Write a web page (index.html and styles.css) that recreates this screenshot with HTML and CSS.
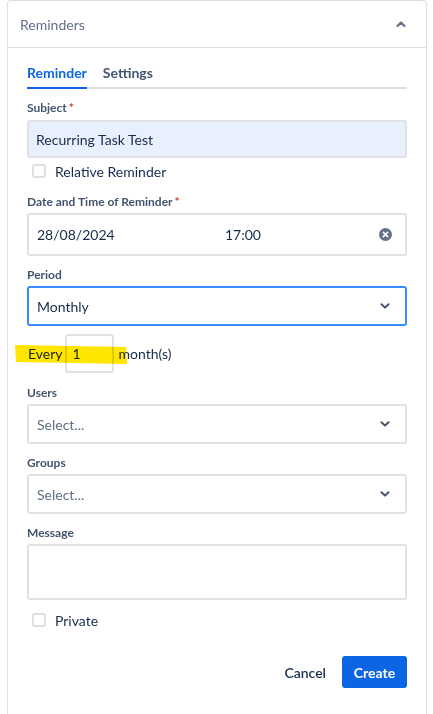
FILE: index.html
```html
<!DOCTYPE html>
<html lang="en">
<head>
<meta charset="utf-8">
<title>Reminders</title>
<link rel="stylesheet" href="styles.css">
</head>
<body>
<div class="panel">
  <div class="panel-header">
    <span class="panel-title">Reminders</span>
    <svg class="caret-up" width="10" height="6" viewBox="0 0 10 6"><path d="M1.5 5 L5 1.6 L8.5 5" fill="none" stroke="#626f86" stroke-width="2.2" stroke-linecap="round" stroke-linejoin="round"/></svg>
  </div>
  <div class="panel-body">
    <div class="tabs">
      <div class="tab active">Reminder</div>
      <div class="tab">Settings</div>
    </div>

    <label class="field-label first">Subject<span class="req">*</span></label>
    <div class="input autofill">Recurring Task Test</div>

    <div class="check-row">
      <span class="checkbox"></span><span class="check-text">Relative Reminder</span>
    </div>

    <label class="field-label">Date and Time of Reminder<span class="req">*</span></label>
    <div class="input datetime">
      <span class="date">28/08/2024</span>
      <span class="time">17:00</span>
      <svg class="clear" width="13" height="13" viewBox="0 0 12 12"><circle cx="6" cy="6" r="6" fill="#626f86"/><path d="M4 4 L8 8 M8 4 L4 8" stroke="#fff" stroke-width="1.6" stroke-linecap="round"/></svg>
    </div>

    <label class="field-label">Period</label>
    <div class="input select focused">
      <span class="value">Monthly</span>
      <svg class="chev" width="10" height="6" viewBox="0 0 10 6"><path d="M1.5 1.2 L5 4.6 L8.5 1.2" fill="none" stroke="#44546f" stroke-width="2" stroke-linecap="round" stroke-linejoin="round"/></svg>
    </div>

    <div class="every-row">
      <span class="every-text">Every</span>
      <span class="num-box">1</span>
      <span class="every-text">month(s)</span>
      <svg class="highlight" width="114" height="24" viewBox="0 0 114 24" preserveAspectRatio="none"><path d="M1 3 L112 5 L113 22 L2 20 Z" fill="#ffe500"/></svg>
    </div>

    <label class="field-label gap12">Users</label>
    <div class="input select">
      <span class="placeholder">Select...</span>
      <svg class="chev" width="10" height="6" viewBox="0 0 10 6"><path d="M1.5 1.2 L5 4.6 L8.5 1.2" fill="none" stroke="#44546f" stroke-width="2" stroke-linecap="round" stroke-linejoin="round"/></svg>
    </div>

    <label class="field-label">Groups</label>
    <div class="input select">
      <span class="placeholder">Select...</span>
      <svg class="chev" width="10" height="6" viewBox="0 0 10 6"><path d="M1.5 1.2 L5 4.6 L8.5 1.2" fill="none" stroke="#44546f" stroke-width="2" stroke-linecap="round" stroke-linejoin="round"/></svg>
    </div>

    <label class="field-label">Message</label>
    <div class="input textarea"></div>

    <div class="check-row private">
      <span class="checkbox"></span><span class="check-text">Private</span>
    </div>

    <div class="actions">
      <button class="btn-subtle">Cancel</button>
      <button class="btn-primary">Create</button>
    </div>
  </div>
</div>
</body>
</html>
```
FILE: styles.css
```css
* { box-sizing: border-box; }
html, body { margin: 0; padding: 0; background: #fff; }
body {
  font-family: "Lato", "Noto Sans", "Liberation Sans", sans-serif;
  font-size: 14px;
  color: #172b4d;
  height: 100vh;
  overflow: hidden;
}
.panel {
  margin-left: 7px;
  width: 420px;
  height: 100vh;
  border: 1px solid #dcdfe4;
  border-bottom: none;
  border-radius: 4px 4px 0 0;
}
.panel-header {
  height: 47px;
  border-bottom: 1px solid #dcdfe4;
  display: flex;
  align-items: center;
  justify-content: space-between;
  padding: 0 20px 0 12px;
}
.panel-title { color: #626f86; font-size: 14px; }
.caret-up { display: block; }
.panel-body { padding: 0 19px 0 19px; }

.tabs {
  margin-top: 15px;
  display: flex;
  gap: 16px;
  box-shadow: inset 0 -2px 0 #dcdfe4;
}
.tab {
  line-height: 20px;
  padding-bottom: 4px;
  border-bottom: 2px solid transparent;
  font-weight: 700;
  color: #44546f;
  font-size: 14px;
}
.tab.active { color: #0c66e4; border-bottom-color: #0c66e4; }

.field-label {
  display: block;
  font-size: 12px;
  font-weight: 700;
  color: #44546f;
  line-height: 16px;
  margin-top: 11px;
  margin-bottom: 3px;
}
.field-label.first { margin-bottom: 4px; }
.field-label.gap12 { margin-top: 12px; }
.req { color: #c9372c; margin-left: 2px; }

.input {
  height: 40px;
  border: 2px solid #dfe1e6;
  border-radius: 3px;
  background: #fff;
  display: flex;
  align-items: center;
  padding: 0 14px 0 8px;
  font-size: 14px;
}
.input.autofill { background: #e8f0fe; height: 38px; padding-left: 7px; }
.input.datetime { height: 43px; padding-right: 13px; }
.datetime .date { width: 188px; }
.datetime .time { flex: 1; }
.clear { display: block; }
.input.select { justify-content: space-between; padding-right: 15px; }
.input.focused { border-color: #388bff; }
.placeholder { color: #626f86; }
.chev { display: block; }
.input.textarea { height: 56px; }

.check-row {
  display: flex;
  align-items: center;
  height: 20px;
  margin-top: 3px;
  padding-left: 5px;
}
.checkbox {
  width: 14px;
  height: 14px;
  border: 2px solid #dcdfe4;
  border-radius: 3px;
  margin-right: 9px;
  flex: none;
}
.check-text { color: #172b4d; }
.check-row.private { margin-top: 10px; }
.check-row + .field-label { margin-top: 13px; }

.every-row {
  position: relative;
  display: flex;
  align-items: center;
  margin-top: 8px;
  height: 39px;
  padding-left: 1px;
}
.num-box {
  width: 49px;
  height: 39px;
  border: 2px solid #dfe1e6;
  border-radius: 3px;
  margin: 0 5px 0 2px;
  display: flex;
  align-items: center;
  padding-left: 6px;
}
.highlight {
  position: absolute;
  left: -13px;
  top: 8px;
  mix-blend-mode: multiply;
}

.actions {
  display: flex;
  justify-content: flex-end;
  align-items: center;
  margin-top: 26px;
  gap: 16px;
}
.btn-subtle, .btn-primary {
  font-family: inherit;
  font-size: 14px;
  font-weight: 700;
  border: none;
  border-radius: 3px;
  height: 32px;
  cursor: pointer;
}
.btn-subtle { background: transparent; color: #172b4d; padding: 0; font-weight: 600; }
.btn-primary { background: #0c66e4; color: #fff; width: 65px; }
```
